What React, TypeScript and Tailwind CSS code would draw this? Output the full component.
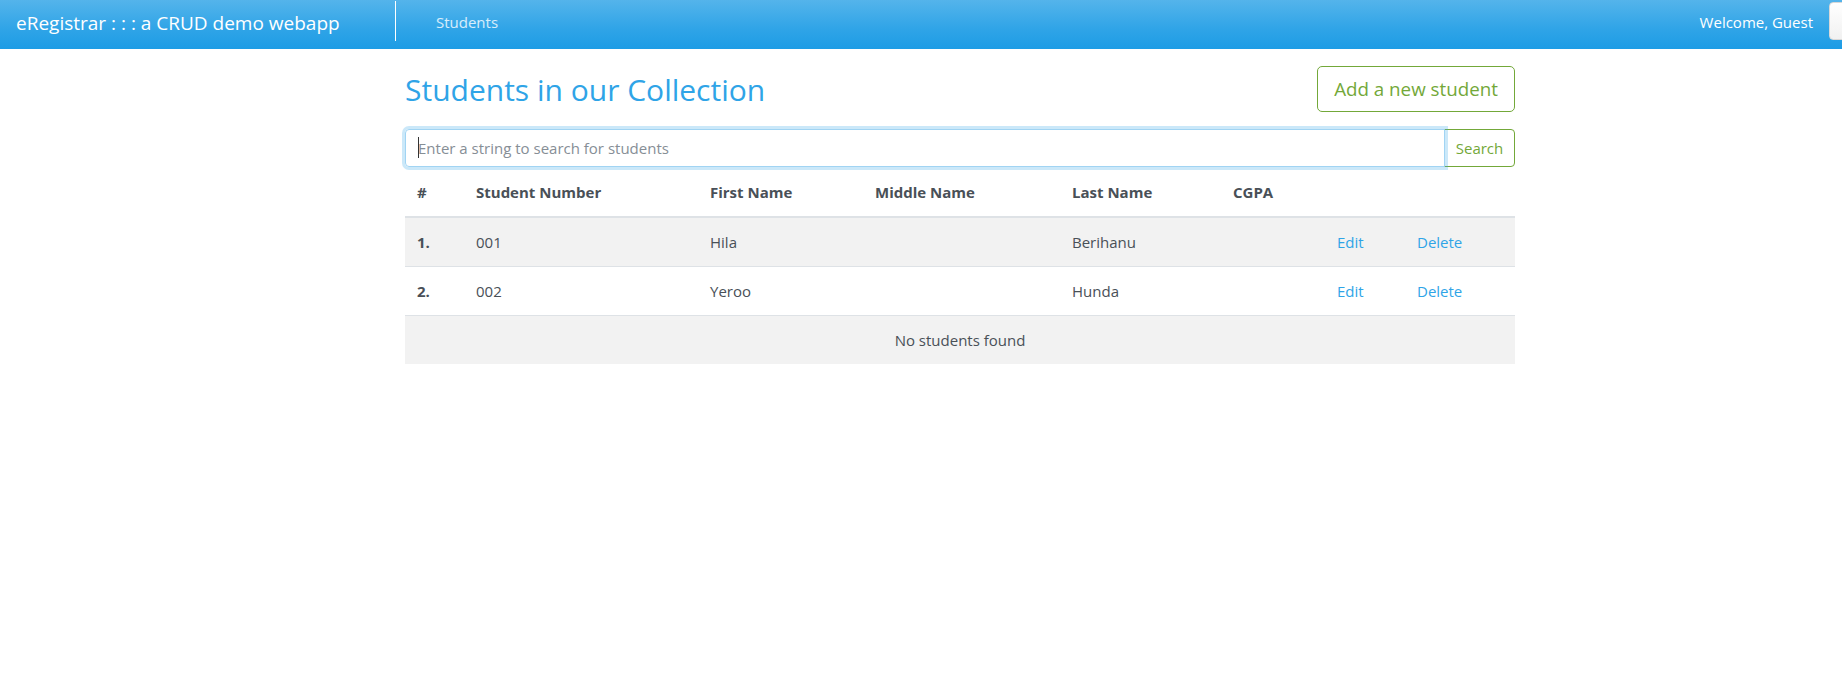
import React from "react";

interface Student {
  no: number;
  studentNumber: string;
  firstName: string;
  middleName: string;
  lastName: string;
  cgpa: string;
}

const students: Student[] = [
  { no: 1, studentNumber: "001", firstName: "Hila", middleName: "", lastName: "Berihanu", cgpa: "" },
  { no: 2, studentNumber: "002", firstName: "Yeroo", middleName: "", lastName: "Hunda", cgpa: "" },
];

export default function App() {
  return (
    <div className="min-h-screen bg-white font-['Open_Sans',sans-serif] text-[15px] leading-6 text-[#495057]">
      {/* navbar */}
      <nav className="h-[49px] w-full overflow-hidden flex items-center pb-[6px] bg-[linear-gradient(#54b4eb,#2fa4e7_60%,#1d9ce5)]">
        <div className="pl-4 w-[395px] shrink-0 text-[19px] leading-[30px] text-white pt-[2px]">
          eRegistrar : : : a CRUD demo webapp
        </div>
        <div className="w-px h-[40px] self-start mt-px bg-white shrink-0" />
        <a className="ml-[40px] text-[15px] text-white/80 shrink-0">Students</a>
        <div className="flex-1" />
        <span className="text-[15px] text-white shrink-0">Welcome, Guest</span>
        {/* login button, mostly past the right edge */}
        <button
          aria-label="Login"
          className="ml-4 mr-[-60px] w-[73px] h-[38px] self-start mt-[2px] shrink-0 rounded-[4px] border border-[#d8d8d8] bg-[linear-gradient(#ffffff,#f1f1f1)]"
        />
      </nav>

      <div className="ml-[405px] w-[1110px]">
        {/* heading row */}
        <div className="mt-[17px] h-[46px] flex items-center justify-between">
          <h2 className="text-[30px] leading-[1.2] font-normal text-[#2fa4e7] pt-[2px]">Students in our Collection</h2>
          <button className="w-[198px] h-[46px] rounded-[5px] border border-[#73a839] text-[18.75px] text-[#73a839] bg-white">
            Add a new student
          </button>
        </div>

        {/* search */}
        <div className="mt-[17px] flex h-[38px]">
          <div className="relative flex-1 z-10">
            <input
              className="w-full h-full rounded-l-[4px] border border-[#a1d4f3] px-3 text-[15px] text-[#495057] placeholder:text-[#868e96] outline-none shadow-[0_0_0_3px_rgba(47,164,231,0.25)]"
              placeholder="Enter a string to search for students"
            />
            <span className="absolute left-[12.5px] top-[8px] w-px h-[21px] bg-[#333]" />
          </div>
          <button className="w-[71px] -ml-px rounded-r-[4px] border border-[#73a839] text-[15px] text-[#73a839] bg-white">
            Search
          </button>
        </div>

        {/* table */}
        <table className="mt-px w-full table-fixed text-left">
          <thead>
            <tr>
              <th className="w-[59px] px-3 py-3 font-bold border-b-2 border-[#dee2e6]">#</th>
              <th className="w-[234px] px-3 py-3 font-bold border-b-2 border-[#dee2e6]">Student Number</th>
              <th className="w-[165px] px-3 py-3 font-bold border-b-2 border-[#dee2e6]">First Name</th>
              <th className="w-[197px] px-3 py-3 font-bold border-b-2 border-[#dee2e6]">Middle Name</th>
              <th className="w-[161px] px-3 py-3 font-bold border-b-2 border-[#dee2e6]">Last Name</th>
              <th className="w-[104px] px-3 py-3 font-bold border-b-2 border-[#dee2e6]">CGPA</th>
              <th className="w-[80px] px-3 py-3 border-b-2 border-[#dee2e6]"></th>
              <th className="w-[110px] px-3 py-3 border-b-2 border-[#dee2e6]"></th>
            </tr>
          </thead>
          <tbody>
            {students.map((s, idx) => (
              <tr key={s.no} className={idx % 2 === 0 ? "bg-[#f2f2f2]" : "bg-white"}>
                <td className="px-3 py-3 font-bold border-t border-[#dee2e6]">{s.no}.</td>
                <td className="px-3 py-3 border-t border-[#dee2e6]">{s.studentNumber}</td>
                <td className="px-3 py-3 border-t border-[#dee2e6]">{s.firstName}</td>
                <td className="px-3 py-3 border-t border-[#dee2e6]">{s.middleName}</td>
                <td className="px-3 py-3 border-t border-[#dee2e6]">{s.lastName}</td>
                <td className="px-3 py-3 border-t border-[#dee2e6]">{s.cgpa}</td>
                <td className="px-3 py-3 border-t border-[#dee2e6]">
                  <a className="text-[#2fa4e7] cursor-pointer">Edit</a>
                </td>
                <td className="px-3 py-3 border-t border-[#dee2e6]">
                  <a className="text-[#2fa4e7] cursor-pointer">Delete</a>
                </td>
              </tr>
            ))}
            <tr className="bg-[#f2f2f2]">
              <td colSpan={8} className="px-3 py-3 text-center border-t border-[#dee2e6]">
                No students found
              </td>
            </tr>
          </tbody>
        </table>
      </div>
    </div>
  );
}
